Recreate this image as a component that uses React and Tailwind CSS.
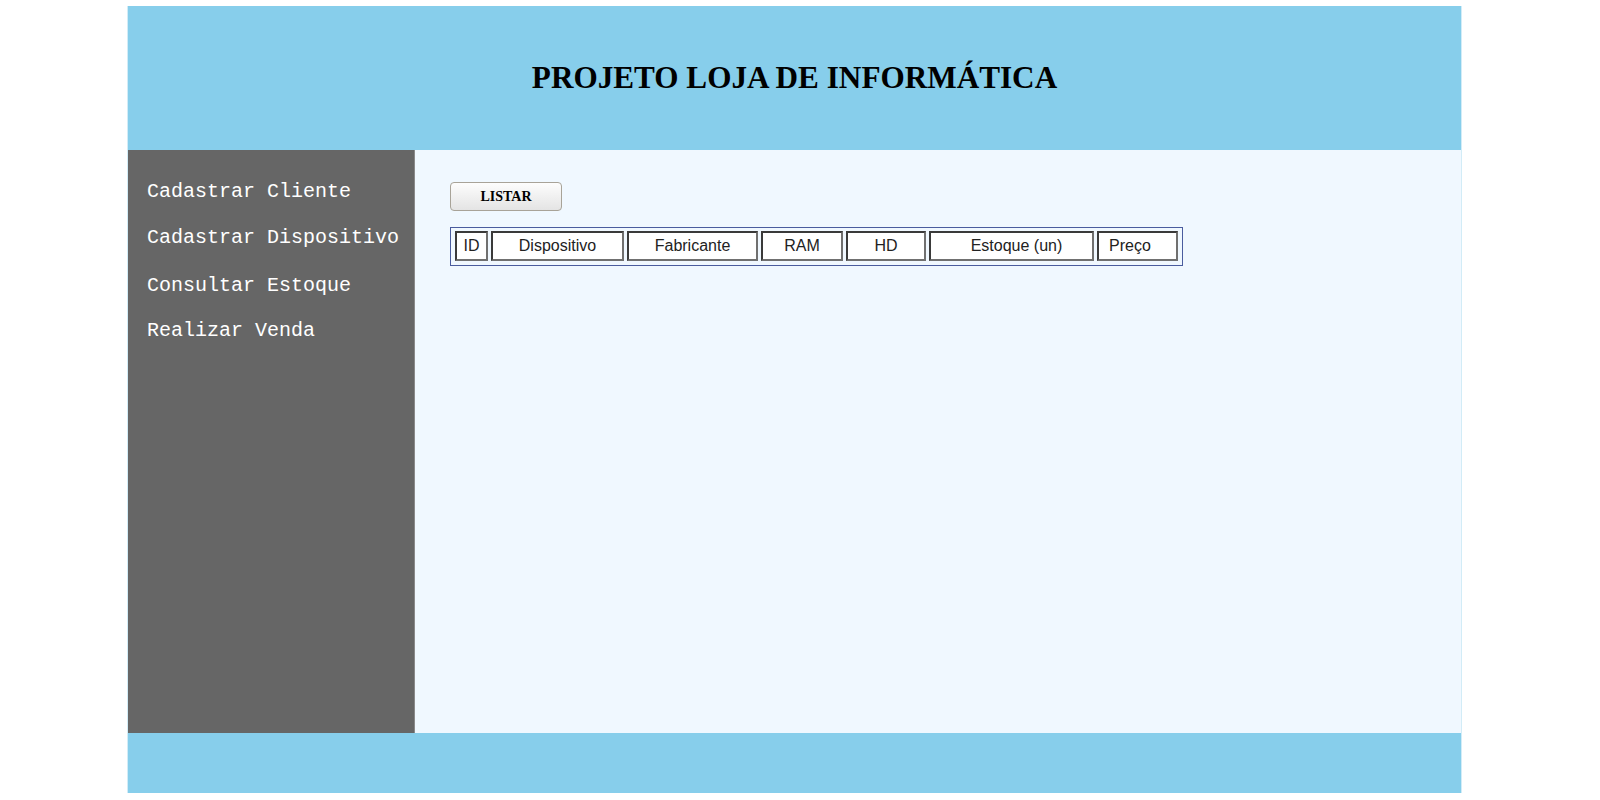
const menu = ["Cadastrar Cliente", "Cadastrar Dispositivo", "Consultar Estoque", "Realizar Venda"];

const colunas = [
    { label: "ID", cls: "w-[33px] justify-center" },
    { label: "Dispositivo", cls: "w-[133px] justify-center" },
    { label: "Fabricante", cls: "w-[131px] justify-center" },
    { label: "RAM", cls: "w-[82px] justify-center" },
    { label: "HD", cls: "w-[80px] justify-center" },
    { label: "Estoque (un)", cls: "w-[165px] justify-center pl-[10px]" },
    { label: "Preço", cls: "w-[81px] justify-start pl-[10px]" },
];

const App = () => {
    return (
        <div className="min-h-[800px] bg-white pt-[6px]">
            <div className="ml-[127px] w-[1335px] border-x border-[#d2ecf7]">
                {/* header */}
                <div className="h-[144px] bg-[#87ceeb] flex items-center justify-center">
                    <h1 className="text-[31.2px] font-bold text-black font-['Liberation_Serif',serif]">
                        PROJETO LOJA DE INFORMÁTICA
                    </h1>
                </div>

                <div className="flex h-[583px]">
                    {/* menu lateral */}
                    <div className="w-[287px] bg-[#666666] border-r border-[#8a8a8a] pt-[30px] pl-[19px] flex flex-col">
                        {menu.map((item, idx) => (
                            <a
                                key={idx}
                                href="#"
                                className={
                                    "text-white text-[20px] leading-[24px] font-['Liberation_Mono',monospace] " +
                                    (idx === 1 ? "mt-[22px]" : idx === 2 ? "mt-[24px]" : idx === 3 ? "mt-[21px]" : "")
                                }
                            >
                                {item}
                            </a>
                        ))}
                    </div>

                    {/* conteudo */}
                    <div className="flex-1 bg-[#f0f8ff] pl-[35px] pt-[32px] flex flex-col items-start">
                        <button className="w-[112px] h-[29px] rounded-[4px] border border-[#a8a398] bg-gradient-to-b from-[#fdfdfd] to-[#e4e4e4] text-[14px] font-bold text-black font-['Liberation_Serif',serif]">
                            LISTAR
                        </button>

                        <div className="mt-[16px] flex gap-[3px] border border-[#4a5c9e] px-[4px] pt-[3px] pb-[4px]">
                            {colunas.map((c, idx) => (
                                <div
                                    key={idx}
                                    className={
                                        "h-[30px] flex items-center border-2 border-t-[#3a3a3a] border-l-[#3a3a3a] border-r-[#707070] border-b-[#707070] bg-white text-[16px] text-[#222] font-['Liberation_Sans',Arial,sans-serif] " +
                                        c.cls
                                    }
                                >
                                    {c.label}
                                </div>
                            ))}
                        </div>
                    </div>
                </div>

                {/* rodape */}
                <div className="h-[60px] bg-[#87ceeb]"></div>
            </div>
        </div>
    );
};

export default App;
